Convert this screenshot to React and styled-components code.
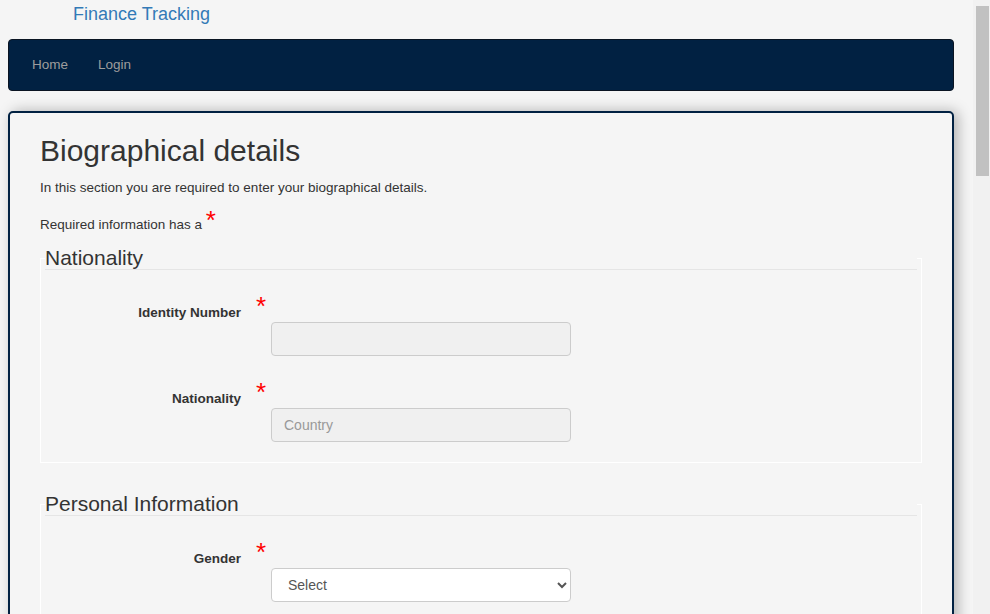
import styled, { createGlobalStyle } from "styled-components";

const GlobalStyle = createGlobalStyle`
  html, body {
    margin: 0;
    padding: 0;
    overflow: hidden;
    background: #f5f5f5;
  }
  * {
    box-sizing: border-box;
  }
`;

const Page = styled.div`
  display: flex;
  height: 100vh;
  overflow: hidden;
  background: #f5f5f5;
  color: #333;
  font-family: "Liberation Sans", Arial, sans-serif;
  font-size: 13.5px;
  line-height: 1.42857;
`;

const Viewport = styled.div`
  flex: 1;
  min-width: 0;
  overflow: hidden;
`;

// window scrollbar, drawn since the headless page hides the native one
const ScrollTrack = styled.div`
  flex: 0 0 17px;
  padding: 6px 1px 0 3px;
  background: #f1f1f1;
`;

const ScrollThumb = styled.div`
  height: 170px;
  background: #c1c1c1;
`;

const Container = styled.div`
  width: 946px;
  margin-left: 8px;
  padding-bottom: 20px;
`;

const Header = styled.div`
  height: 39px;
  padding: 4px 0 0 65px;
`;

const Brand = styled.a`
  font-size: 18px;
  line-height: 20px;
  color: #337ab7;
  text-decoration: none;
`;

const Navbar = styled.nav`
  display: flex;
  align-items: center;
  gap: 30px;
  height: 52px;
  padding-left: 23px;
  background: #012142;
  border: 1px solid #0a1422;
  border-radius: 4px;
`;

const NavLink = styled.a`
  color: #9d9d9d;
  line-height: 20px;
  text-decoration: none;
`;

const Panel = styled.main`
  margin-top: 20px;
  min-height: 2050px;
  padding: 0 30px;
  background: #f5f5f5;
  border: 2px solid #012142;
  border-radius: 5px;
  box-shadow: 4px 0 14px rgba(0, 0, 0, 0.28);
`;

const Title = styled.h1`
  margin: 21px 0 11px;
  font-size: 30px;
  font-weight: 500;
  line-height: 33px;
`;

const Text = styled.p`
  margin: 0 0 ${(p) => p.$gap}px;
`;

const Star = styled.span`
  color: #ff0000;
  font-size: 26px;
  line-height: 0;
`;

const Fieldset = styled.fieldset`
  margin: ${(p) => (p.$first ? 0 : 30)}px 0 0;
  padding: 0 4px 20px;
  border: 1px solid #fff;
  min-width: 0;
`;

const Legend = styled.legend`
  width: 100%;
  padding: 0;
  font-size: 21px;
  line-height: 22px;
  color: #333;
  border-bottom: 1px solid #e5e5e5;
`;

const Group = styled.div`
  display: grid;
  grid-template-columns: 196px 30px 300px;
  grid-template-rows: 19px 34px;
  margin-top: 33px;
`;

const Label = styled.label`
  grid-column: 1;
  grid-row: 1;
  text-align: right;
  font-weight: bold;
  line-height: 19px;
`;

const FieldStar = styled(Star)`
  grid-column: 2;
  grid-row: 1;
  align-self: start;
  padding-left: 15px;
  line-height: 26px;
  margin-top: -10px;
`;

const Input = styled.input`
  grid-column: 3;
  grid-row: 2;
  width: 300px;
  height: 34px;
  padding: 6px 12px;
  font-family: "Liberation Sans", Arial, sans-serif;
  font-size: 14px;
  color: #555;
  background: #f0f0f0;
  border: 1px solid #ccc;
  border-radius: 4px;
  outline: none;

  &::placeholder {
    color: #999;
  }
`;

const Select = styled.select`
  grid-column: 3;
  grid-row: 2;
  width: 300px;
  height: 34px;
  padding: 6px 12px;
  font-family: "Liberation Sans", Arial, sans-serif;
  font-size: 14px;
  color: #555;
  background: #fff;
  border: 1px solid #ccc;
  border-radius: 4px;
  outline: none;
`;

function Field({ label, children }) {
  return (
    <Group>
      <Label>{label}</Label>
      <FieldStar>*</FieldStar>
      {children}
    </Group>
  );
}

export default function App() {
  return (
    <Page>
      <GlobalStyle />
      <Viewport>
        <Container>
          <Header>
            <Brand href="#">Finance Tracking</Brand>
          </Header>
          <Navbar>
            <NavLink href="#">Home</NavLink>
            <NavLink href="#">Login</NavLink>
          </Navbar>
          <Panel>
            <Title>Biographical details</Title>
            <Text $gap={18}>
              In this section you are required to enter your biographical details.
            </Text>
            <Text $gap={12}>
              Required information has a <Star>*</Star>
            </Text>
            <Fieldset $first>
              <Legend>Nationality</Legend>
              <Field label="Identity Number">
                <Input type="text" />
              </Field>
              <Field label="Nationality">
                <Input type="text" placeholder="Country" />
              </Field>
            </Fieldset>
            <Fieldset>
              <Legend>Personal Information</Legend>
              <Field label="Gender">
                <Select defaultValue="">
                  <option value="">Select</option>
                  <option value="male">Male</option>
                  <option value="female">Female</option>
                </Select>
              </Field>
            </Fieldset>
          </Panel>
        </Container>
      </Viewport>
      <ScrollTrack>
        <ScrollThumb />
      </ScrollTrack>
    </Page>
  );
}
